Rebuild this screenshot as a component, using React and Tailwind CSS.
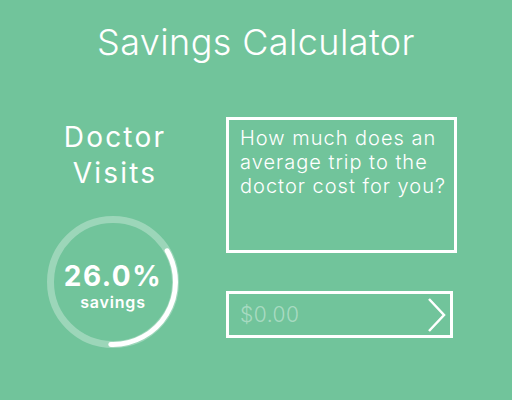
import React from 'react';

// Progress ring for the savings percentage
const SavingsRing = ({ percent }) => {
  return (
    <div className="relative w-[140px] h-[140px]">
      <svg width="140" height="140" viewBox="0 0 140 140">
        <circle cx="70" cy="70" r="62.5" fill="none" stroke="rgba(255,255,255,0.3)" strokeWidth="7" />
        <path
          d="M 124.1 38.75 A 62.5 62.5 0 0 1 67.8 132.46"
          fill="none"
          stroke="#ffffff"
          strokeWidth="5"
          strokeLinecap="round"
        />
      </svg>
      <div className="absolute inset-0 flex flex-col items-center justify-center pt-[8px]">
        <span className="text-[28px] leading-[30px] font-bold tracking-[1.5px]">{percent}</span>
        <span className="mt-[1px] text-[16px] leading-[20px] font-semibold tracking-[0.8px]">savings</span>
      </div>
    </div>
  );
};

const App = () => {
  return (
    <div className="w-[512px] h-[400px] bg-[#71c49b] text-white font-['Inter',sans-serif]">
      <h1 className="pt-[20px] text-center text-[36px] leading-[44px] font-light tracking-[0.4px]">Savings Calculator</h1>

      <div className="flex mt-[53px]">
        {/* left: category + ring */}
        <div className="w-[226px] flex flex-col items-center pt-[2px]">
          <div className="text-center text-[28px] leading-[36px] font-normal tracking-[2.2px] pl-[4px]">
            Doctor
            <br />
            Visits
          </div>
          <div className="mt-[21px]">
            <SavingsRing percent="26.0%" />
          </div>
        </div>

        {/* right: question + input */}
        <div className="w-[231px] flex flex-col">
          <div className="h-[136px] border-[3px] border-white pl-[11px] pt-[6px]">
            <p className="text-[20px] leading-[24px] font-[350] tracking-[1px] whitespace-nowrap">
              How much does an
              <br />
              average trip to the
              <br />
              doctor cost for you?
            </p>
          </div>

          <div className="mt-[38px] w-[227px] h-[47px] border-[3px] border-white flex items-center">
            <input
              type="text"
              placeholder="$0.00"
              className="flex-1 min-w-0 bg-transparent outline-none pl-[11px] text-[21px] font-light tracking-[0.5px] text-white placeholder:text-white/40"
            />
            <svg width="24" height="38" viewBox="0 0 24 38" className="mr-[2px]">
              <path d="M5 3 L20 19 L5 35" fill="none" stroke="#ffffff" strokeWidth="2.5" />
            </svg>
          </div>
        </div>
      </div>
    </div>
  );
};

export default App;
